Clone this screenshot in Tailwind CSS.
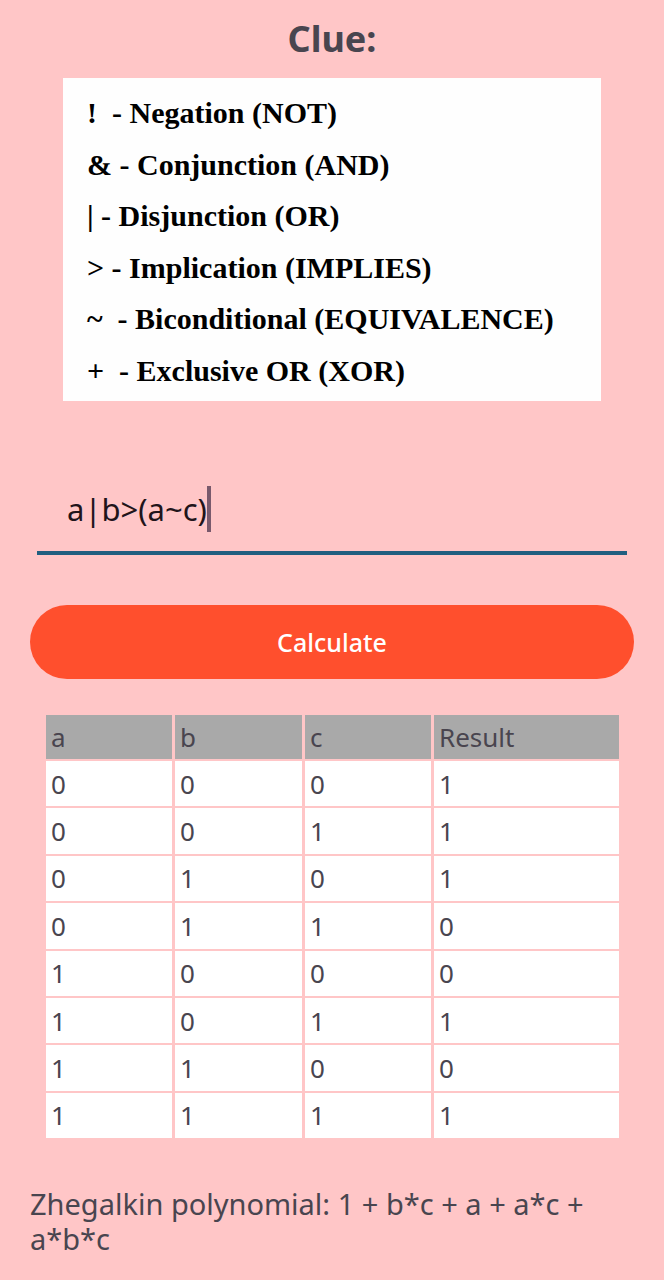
<!DOCTYPE html>
<html lang="en">
<head>
<meta charset="utf-8">
<meta name="viewport" content="width=device-width, initial-scale=1">
<title>Truth table calculator</title>
<script src="https://cdn.jsdelivr.net/npm/@tailwindcss/browser@4"></script>
</head>
<body class="min-h-screen bg-[#ffc6c7] font-['Noto_Sans','Open_Sans',sans-serif] text-[#49454f]">
<main class="flex flex-col px-[30px] pt-4">
  <h1 class="text-center text-[36px] leading-[46px] font-bold">Clue:</h1>
  <ul class="mx-[33px] mt-4 flex aspect-[538/323] flex-col justify-between bg-[#fefefe] pt-[17px] pb-3 pl-6 font-['Liberation_Serif',serif] text-[30px] leading-9 font-bold whitespace-pre text-black">
    <li>!&nbsp; - Negation (NOT)</li>
    <li>&amp; - Conjunction (AND)</li>
    <li>| - Disjunction (OR)</li>
    <li>&gt; - Implication (IMPLIES)</li>
    <li>~&nbsp; - Biconditional (EQUIVALENCE)</li>
    <li>+&nbsp; - Exclusive OR (XOR)</li>
  </ul>
  <form class="mt-20 flex flex-col" onsubmit="return false">
    <div class="mx-[7px] flex h-[74px] items-start border-b-4 border-[#215f80] pt-[5px] pl-[30px]">
      <input type="text" aria-label="Logical expression" value="a|b&gt;(a~c)" class="field-sizing-content h-[46px] text-[31px] leading-[46px] text-[#21141a] caret-transparent outline-none">
      <span class="h-[46px] w-1 bg-[#79596c]"></span>
    </div>
    <button type="submit" class="mt-[50px] h-[74px] rounded-full bg-[#ff4f2d] text-[25px] leading-8 font-medium text-white">Calculate</button>
  </form>
  <div class="mr-3 ml-[13px] mt-[34px]">
    <table class="h-[427px] w-full table-fixed border-separate border-spacing-x-[3px] border-spacing-y-[2px] text-left text-[26px] leading-9">
      <colgroup><col class="w-[126px]"><col class="w-[127px]"><col class="w-[126px]"><col></colgroup>
      <thead class="bg-[#a9a9a9] [&_th]:h-11 [&_th]:pl-[5px] [&_th]:font-normal">
        <tr><th scope="col">a</th><th scope="col">b</th><th scope="col">c</th><th scope="col">Result</th></tr>
      </thead>
      <tbody class="bg-white [&_td]:pl-[5px]">
        <tr><td>0</td><td>0</td><td>0</td><td>1</td></tr>
        <tr><td>0</td><td>0</td><td>1</td><td>1</td></tr>
        <tr><td>0</td><td>1</td><td>0</td><td>1</td></tr>
        <tr><td>0</td><td>1</td><td>1</td><td>0</td></tr>
        <tr><td>1</td><td>0</td><td>0</td><td>0</td></tr>
        <tr><td>1</td><td>0</td><td>1</td><td>1</td></tr>
        <tr><td>1</td><td>1</td><td>0</td><td>0</td></tr>
        <tr><td>1</td><td>1</td><td>1</td><td>1</td></tr>
      </tbody>
    </table>
  </div>
  <p class="mt-[46px] text-[29px] leading-[35px]">Zhegalkin polynomial: 1 + b*c + a + a*c + a*b*c</p>
</main>
</body>
</html>
